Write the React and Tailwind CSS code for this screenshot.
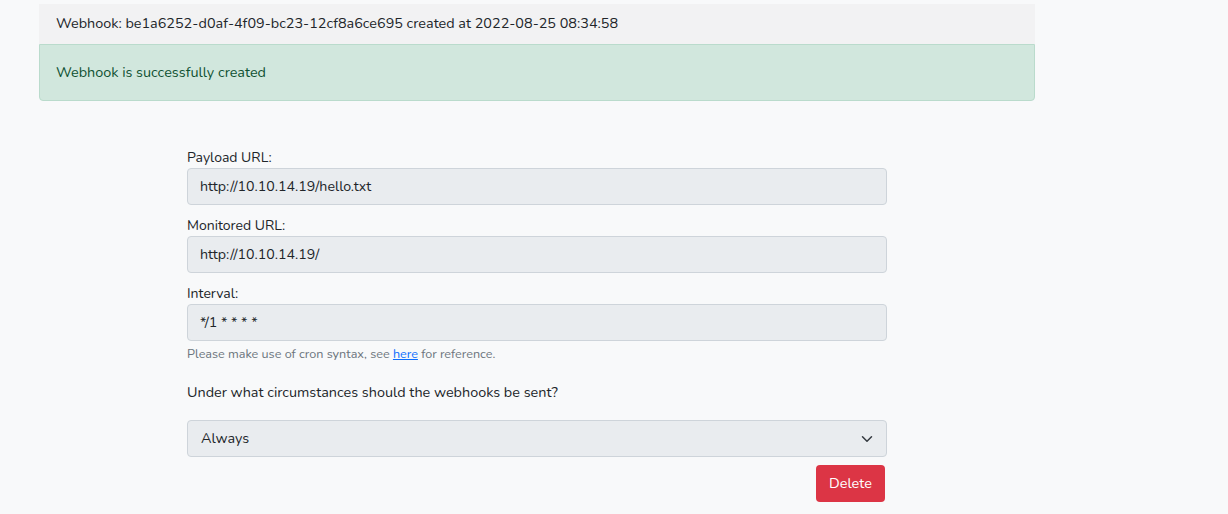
import React from "react";

const font = { fontFamily: "Nunito, Lato, 'Open Sans', sans-serif" };

function Field({ label, value }) {
  return (
    <div className="flex flex-col">
      <label className="h-[21px] text-[14px] leading-[21px] text-[#212529]">{label}</label>
      <div className="h-[37px] rounded-[4px] border border-[#ced4da] bg-[#e9ecef] px-[12px] flex items-center text-[14.2px] text-[#212529]">
        {value}
      </div>
    </div>
  );
}

export default function App() {
  return (
    <div className="min-h-[514px] w-full bg-[#f8f9fa]" style={font}>
      <div className="ml-[39px] w-[996px] pt-[4px]">
        <div className="h-[40px] bg-[#f2f2f3] pl-[17px] flex items-center text-[14.4px] text-[#212529]">
          Webhook: be1a6252-d0af-4f09-bc23-12cf8a6ce695 created at 2022-08-25 08:34:58
        </div>
        <div className="h-[57px] rounded-b-[4px] border border-[#badbcc] bg-[#d1e7dd] pl-[16px] pt-[1px] flex items-center text-[14.4px] text-[#0f5132]">
          Webhook is successfully created
        </div>
        <div className="ml-[148px] w-[700px] pt-[46px]">
          <div className="flex flex-col gap-[10px]">
            <Field label="Payload URL:" value="http://10.10.14.19/hello.txt" />
            <Field label="Monitored URL:" value="http://10.10.14.19/" />
            <Field label="Interval:" value="*/1 * * * *" />
          </div>
          <div className="mt-[4px] h-[17px] text-[12.6px] leading-[17px] text-[#6c757d]">
            Please make use of cron syntax, see{" "}
            <a href="#" className="text-[#0d6efd] underline">here</a> for reference.
          </div>
          <div className="mt-[20px] h-[21px] text-[14.4px] leading-[21px] text-[#212529]">
            Under what circumstances should the webhooks be sent?
          </div>
          <div className="mt-[17px] h-[37px] rounded-[4px] border border-[#ced4da] bg-[#e9ecef] pl-[13px] pr-[13px] flex items-center justify-between text-[14.4px] text-[#212529]">
            <span>Always</span>
            <svg width="12" height="12" viewBox="0 0 16 16" fill="none" stroke="#343a40" strokeWidth="2" strokeLinecap="round" strokeLinejoin="round">
              <path d="M2 5l6 6 6-6" />
            </svg>
          </div>
          <div className="mt-[8px] flex justify-end pr-[2px]">
            <button className="h-[37px] w-[69px] rounded-[4px] bg-[#dc3545] text-[14.4px] text-white">
              Delete
            </button>
          </div>
        </div>
      </div>
    </div>
  );
}
